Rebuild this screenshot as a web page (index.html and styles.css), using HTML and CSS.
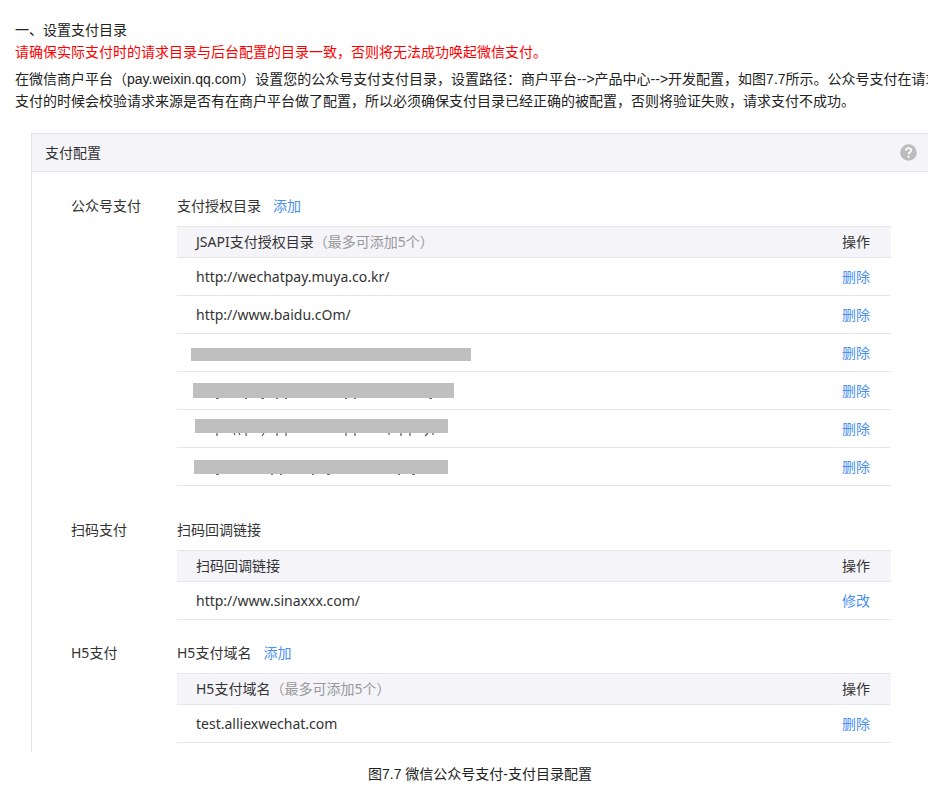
FILE: index.html
```html
<!DOCTYPE html>
<html lang="zh-CN">

<head>
    <meta charset="UTF-8">
    <meta name="viewport" content="width=device-width, initial-scale=1.0">
    <title>设置支付目录</title>
    <link rel="stylesheet" href="styles.css">
</head>

<body>
    <main class="content">
        <p class="line">一、设置支付目录</p>
        <p class="line warning">请确保实际支付时的请求目录与后台配置的目录一致，否则将无法成功唤起微信支付。</p>
        <p class="intro">在微信商户平台（pay.weixin.qq.com）设置您的公众号支付支付目录，设置路径：商户平台--&gt;产品中心--&gt;开发配置，如图7.7所示。公众号支付在请求<br>支付的时候会校验请求来源是否有在商户平台做了配置，所以必须确保支付目录已经正确的被配置，否则将验证失败，请求支付不成功。</p>

        <figure class="figure">
            <div class="panel">
                <div class="panel-header">
                    <span>支付配置</span>
                    <button type="button" class="help" aria-label="帮助">
                        <svg width="17" height="17" viewBox="0 0 17 17">
                            <circle cx="8.5" cy="8.5" r="8.3" fill="#bdbdbd"/>
                            <path d="M5.9 6.7C5.9 3.2 11.2 3.2 11.2 6.4C11.2 8.2 8.6 8.2 8.6 10.3" fill="none" stroke="#fff" stroke-width="1.8"/>
                            <circle cx="8.6" cy="12.7" r="1.1" fill="#fff"/>
                        </svg>
                    </button>
                </div>

                <div class="panel-body">
                    <!-- 公众号支付 -->
                    <section class="group group-large">
                        <div class="group-name">公众号支付</div>
                        <div class="group-main">
                            <div class="group-title">支付授权目录<a href="#" class="add">添加</a></div>
                            <table>
                                <thead>
                                    <tr>
                                        <th>JSAPI支付授权目录<span class="hint">（最多可添加5个）</span></th>
                                        <th class="action">操作</th>
                                    </tr>
                                </thead>
                                <tbody>
                                    <tr>
                                        <td>http://wechatpay.muya.co.kr/</td>
                                        <td class="action"><a href="#">删除</a></td>
                                    </tr>
                                    <tr>
                                        <td>http://www.baidu.cOm/</td>
                                        <td class="action"><a href="#">删除</a></td>
                                    </tr>
                                    <tr>
                                        <td class="masked">
                                            <svg width="300" height="37" viewBox="0 0 300 37">
                                                <rect x="14" y="14" width="280" height="13" fill="#bfbfbf"/>
                                            </svg>
                                        </td>
                                        <td class="action"><a href="#">删除</a></td>
                                    </tr>
                                    <tr>
                                        <td class="masked">
                                            <svg width="300" height="37" viewBox="0 0 300 37">
                                                <path d="M39 26h3M68 26h2M84 26h3M99 26h2M108 26h2M168 26h2M177 26h2M252 26h3" stroke="#444" stroke-width="1.6"/>
                                                <rect x="16" y="11" width="261" height="15" fill="#bfbfbf"/>
                                            </svg>
                                        </td>
                                        <td class="action"><a href="#">删除</a></td>
                                    </tr>
                                    <tr>
                                        <td class="masked">
                                            <svg width="300" height="37" viewBox="0 0 300 37">
                                                <path d="M40 23v3M57 23l1 2M62 23l1 2M69 23v3M87 23l-2 3M100 23v3M109 23v3M169 23v3M178 23v3M212 23v2M224 23v3M233 23v3M251 23l-3 3M256 23v2" fill="none" stroke="#555" stroke-width="1.2"/>
                                                <rect x="18" y="9" width="253" height="14" fill="#bfbfbf"/>
                                            </svg>
                                        </td>
                                        <td class="action"><a href="#">删除</a></td>
                                    </tr>
                                    <tr>
                                        <td class="masked">
                                            <svg width="300" height="37" viewBox="0 0 300 37">
                                                <path d="M39 26h3M94 26h2M103 26h2M135 26h2M150 26h3M221 26h2M235 26h3" stroke="#444" stroke-width="1.6"/>
                                                <rect x="17" y="12" width="254" height="14" fill="#bfbfbf"/>
                                            </svg>
                                        </td>
                                        <td class="action"><a href="#">删除</a></td>
                                    </tr>
                                </tbody>
                            </table>
                        </div>
                    </section>

                    <!-- 扫码支付 -->
                    <section class="group">
                        <div class="group-name">扫码支付</div>
                        <div class="group-main">
                            <div class="group-title">扫码回调链接</div>
                            <table>
                                <thead>
                                    <tr>
                                        <th>扫码回调链接</th>
                                        <th class="action">操作</th>
                                    </tr>
                                </thead>
                                <tbody>
                                    <tr>
                                        <td>http://www.sinaxxx.com/</td>
                                        <td class="action"><a href="#">修改</a></td>
                                    </tr>
                                </tbody>
                            </table>
                        </div>
                    </section>

                    <!-- H5支付 -->
                    <section class="group">
                        <div class="group-name">H5支付</div>
                        <div class="group-main">
                            <div class="group-title">H5支付域名<a href="#" class="add">添加</a></div>
                            <table>
                                <thead>
                                    <tr>
                                        <th>H5支付域名<span class="hint">（最多可添加5个）</span></th>
                                        <th class="action">操作</th>
                                    </tr>
                                </thead>
                                <tbody>
                                    <tr>
                                        <td>test.alliexwechat.com</td>
                                        <td class="action"><a href="#">删除</a></td>
                                    </tr>
                                </tbody>
                            </table>
                        </div>
                    </section>
                </div>
            </div>
            <figcaption>图7.7 微信公众号支付-支付目录配置</figcaption>
        </figure>
    </main>
</body>

</html>
```
FILE: styles.css
```css
body {
    margin: 0;
    background-color: #fff;
    color: #222;
    font-family: "Liberation Sans", "Noto Sans CJK SC", sans-serif;
    font-size: 14px;
    line-height: 22px;
    overflow-x: hidden;
}

.content {
    min-width: 930px;
    padding: 19px 15px 0;
}

.line {
    margin: 0;
}

.warning {
    color: #f00;
}

.intro {
    margin: 5px 0 0;
    white-space: nowrap;
}

.figure {
    margin: 21px 0 0;
}

.panel {
    margin-left: 16px;
    border-left: 1px solid #e3e4ea;
    color: #333;
    font-family: "Noto Sans", "Noto Sans CJK SC", sans-serif;
    line-height: 20px;
}

.panel-header {
    display: flex;
    justify-content: space-between;
    align-items: center;
    height: 37px;
    padding: 0 28px 0 13px;
    background-color: #f4f4f9;
    border-top: 1px solid #e3e4ea;
    border-bottom: 1px solid #e3e4ea;
}

.help {
    display: flex;
    padding: 0;
    border: none;
    background: none;
    cursor: pointer;
}

.panel-body {
    padding: 24px 54px 9px 39px;
}

.group {
    display: flex;
    margin-bottom: 23px;
}

.group-large {
    margin-bottom: 34px;
}

.group:last-child {
    margin-bottom: 0;
}

.group-name {
    width: 106px;
}

.group-main {
    flex: 1;
}

.group-title {
    margin-bottom: 10px;
}

.add {
    margin-left: 12px;
}

a {
    color: #4a90f0;
    text-decoration: none;
}

a:hover {
    text-decoration: underline;
}

table {
    width: 100%;
    border-collapse: separate;
    border-spacing: 0;
}

th, td {
    box-sizing: border-box;
    height: 38px;
    padding: 0 0 0 19px;
    border-bottom: 1px solid #e6e6ea;
    text-align: left;
    font-weight: normal;
}

th {
    height: 32px;
    background-color: #f4f4f9;
    border-top: 1px solid #e6e6ea;
}

.action {
    width: 49px;
    padding-left: 0;
}

.masked {
    padding: 0;
}

.masked svg {
    display: block;
}

.hint {
    color: #999;
}

figcaption {
    margin-top: 11px;
    text-align: center;
}
```
